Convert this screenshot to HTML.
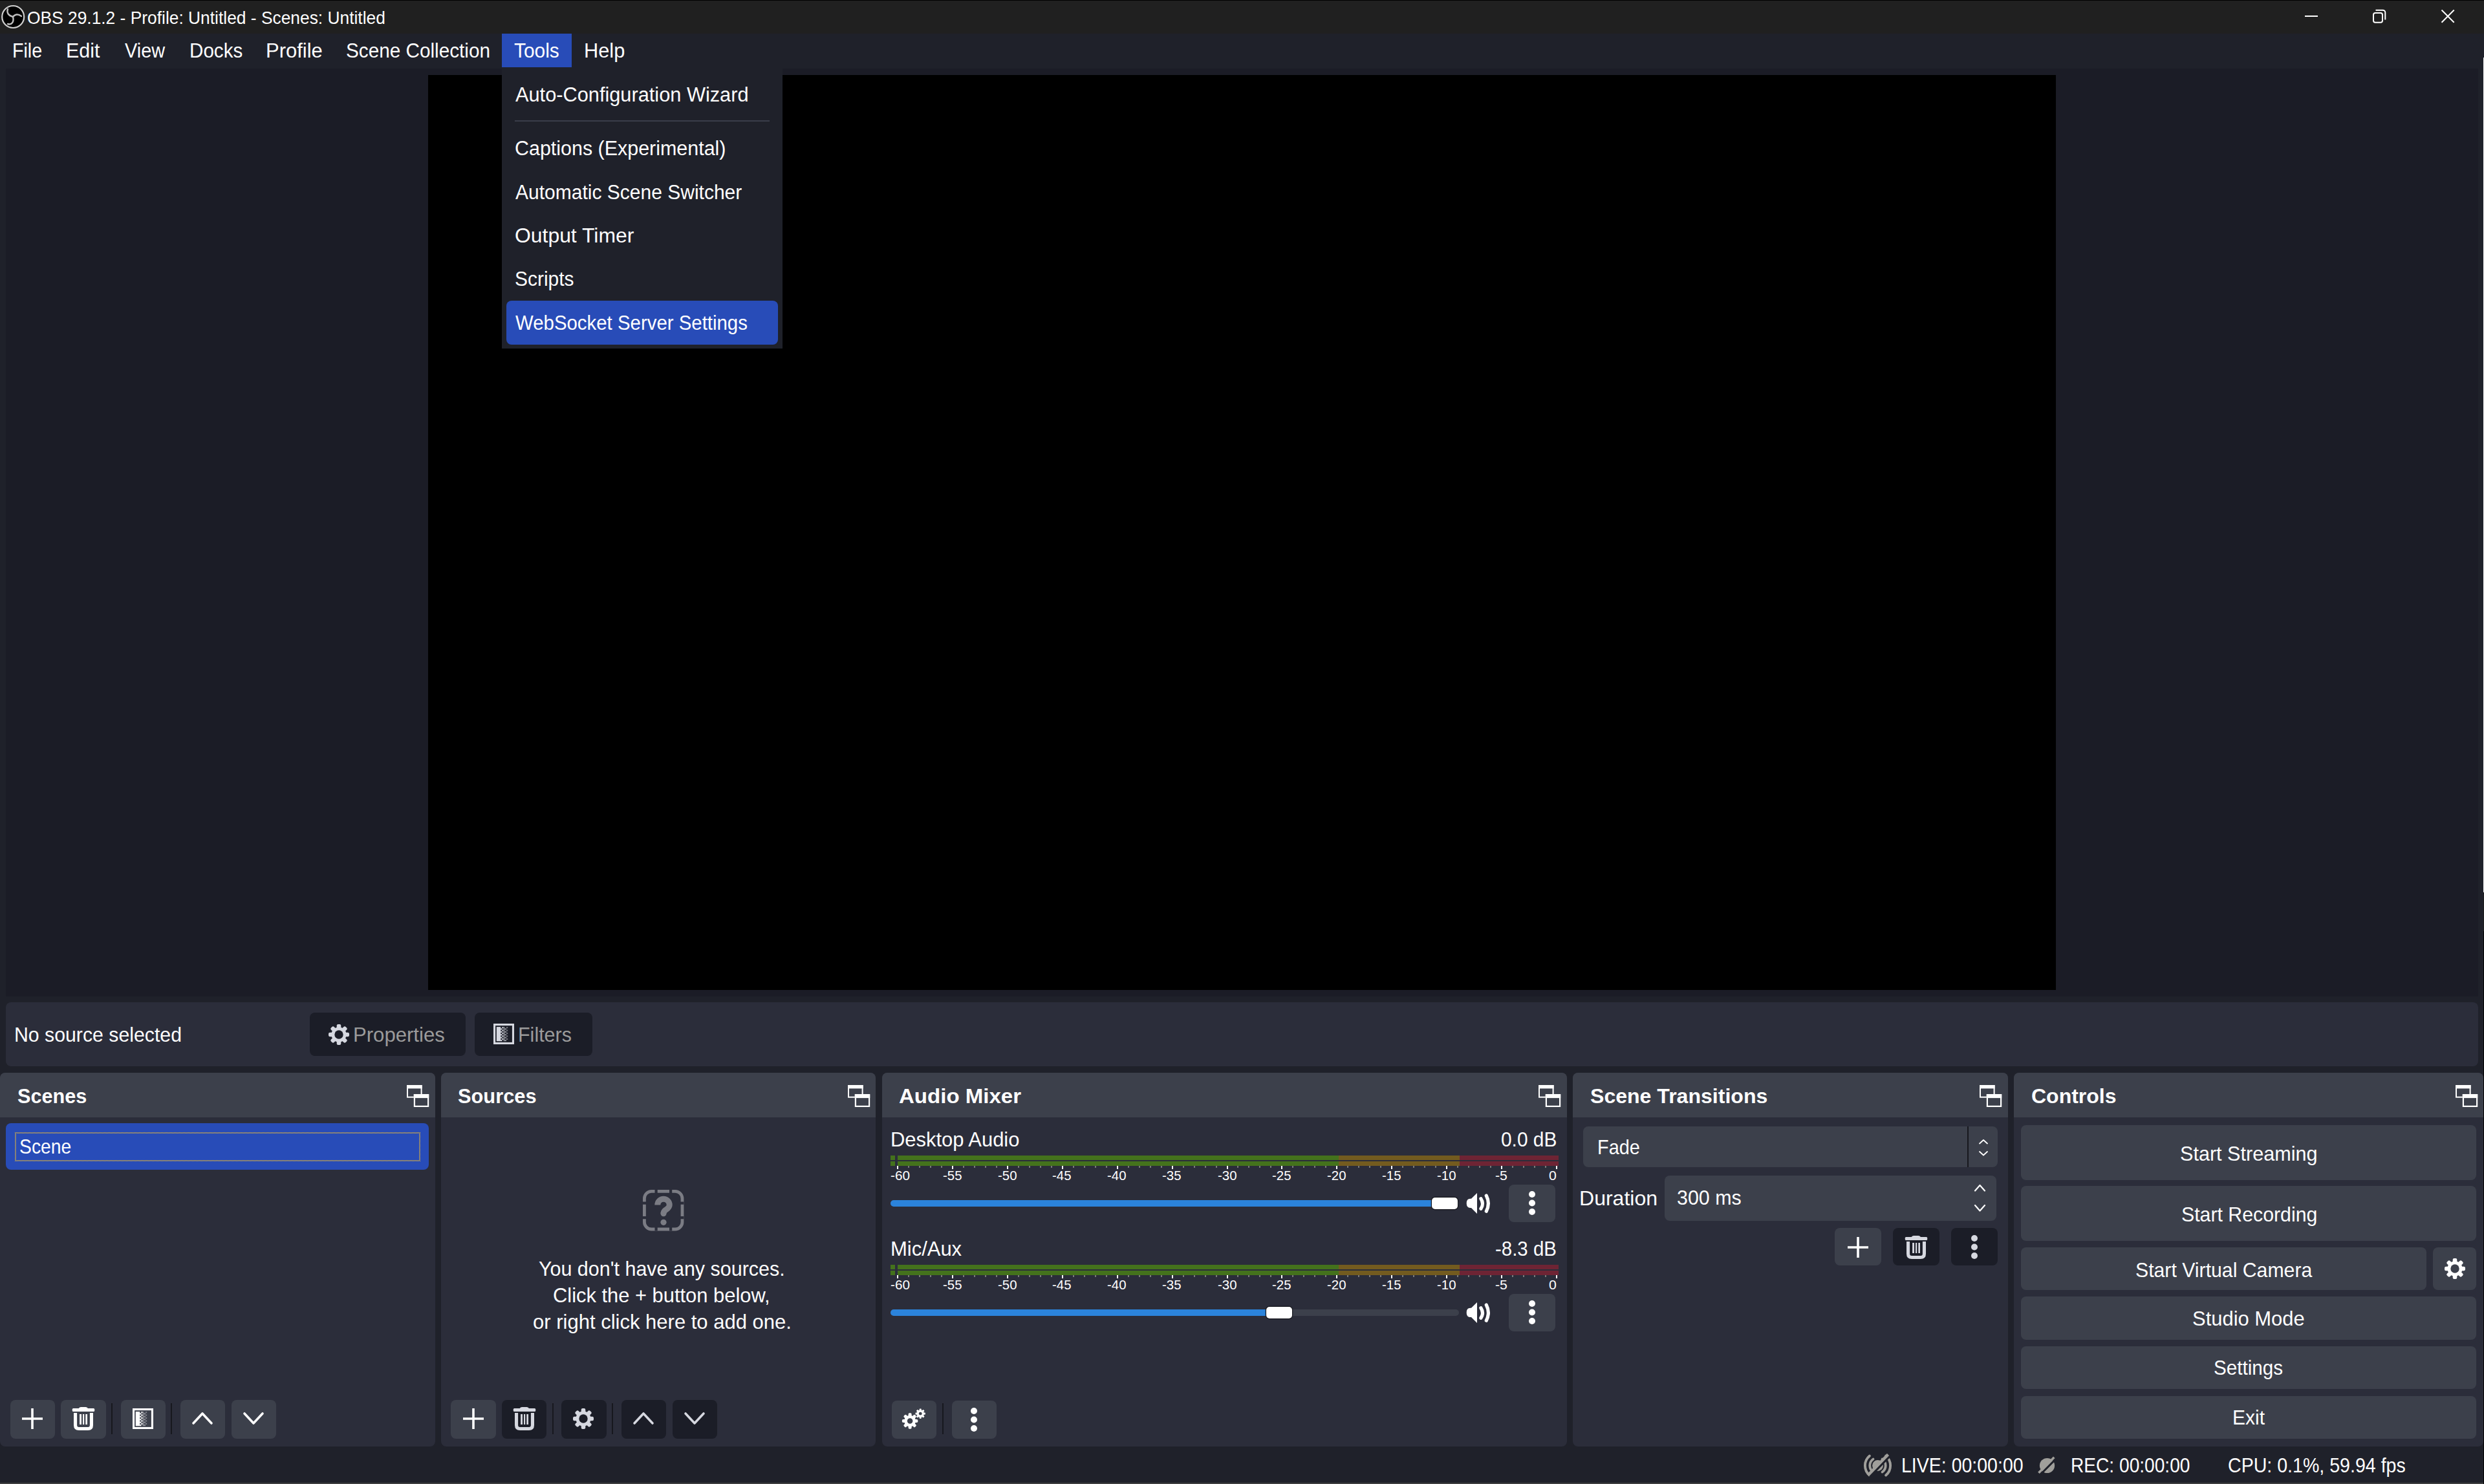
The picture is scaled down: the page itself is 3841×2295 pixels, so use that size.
<!DOCTYPE html>
<html><head><meta charset="utf-8"><title>OBS 29.1.2 - Profile: Untitled - Scenes: Untitled</title>
<style>
html,body{margin:0;padding:0;}
body{width:3841px;height:2295px;overflow:hidden;position:relative;font-family:"Liberation Sans",sans-serif;background:#1f212a;}
svg{display:block;overflow:visible}
</style></head><body>
<div style="position:absolute;left:0px;top:0px;width:3841px;height:2295px;background:#1f212a;"></div>
<div style="position:absolute;left:0px;top:0px;width:3841px;height:1px;background:#000;"></div>
<div style="position:absolute;left:0px;top:1px;width:3841px;height:51px;background:#202020;"></div>
<svg style="position:absolute;left:0px;top:6px" width="40" height="40" viewBox="0 0 40 40"><circle cx="20.2" cy="20" r="17" fill="#000" stroke="#cfcfcf" stroke-width="2.2"/><g fill="none" stroke="#bdbdbd" stroke-width="2.4" stroke-linecap="round"><path d="M12 8 C10 14 13 18 20 20"/><path d="M33 19 C28 15 23 16 20 20"/><path d="M12 31 C18 33 22 28 20 20"/></g></svg>
<div style="position:absolute;left:3564px;top:24px;width:20px;height:2px;background:#fff;"></div>
<svg style="position:absolute;left:3666px;top:12px" width="28" height="28" viewBox="0 0 28 28"><rect x="4" y="8" width="14" height="14.8" rx="3" fill="none" stroke="#fff" stroke-width="2"/><path d="M7.5 3.7 H18.5 A3.8 3.8 0 0 1 22.3 7.5 V18.5" fill="none" stroke="#fff" stroke-width="2"/></svg>
<svg style="position:absolute;left:3770px;top:10px" width="30" height="30" viewBox="0 0 30 30"><path d="M5.5 5.5 L24.7 24.7 M24.7 5.5 L5.5 24.7" stroke="#fff" stroke-width="2"/></svg>
<div style="position:absolute;left:0px;top:52px;width:3841px;height:54px;background:#1f212a;"></div>
<div style="position:absolute;left:776px;top:52px;width:108px;height:52px;background:#284cb8;"></div>
<div style="position:absolute;left:9px;top:106px;width:3823px;height:1435px;background:#1b1c26;"></div>
<div style="position:absolute;left:662px;top:116px;width:2517px;height:1415px;background:#000;"></div>
<div style="position:absolute;left:9px;top:1550px;width:3823px;height:99px;background:#2b2d3a;border-radius:8px;"></div>
<div style="position:absolute;left:479px;top:1566px;width:241px;height:67px;background:#1b1d27;border-radius:8px;"></div>
<div style="position:absolute;left:734px;top:1566px;width:182px;height:67px;background:#1b1d27;border-radius:8px;"></div>
<svg style="position:absolute;left:508px;top:1584px" width="32" height="32" viewBox="0 0 32 32"><g fill="#d6d8e0"><circle cx="16.0" cy="16.0" r="11.60"/><rect x="12.70" y="0.00" width="6.60" height="8.00" rx="2.20" transform="rotate(0 16.0 16.0)"/><rect x="12.70" y="0.00" width="6.60" height="8.00" rx="2.20" transform="rotate(45 16.0 16.0)"/><rect x="12.70" y="0.00" width="6.60" height="8.00" rx="2.20" transform="rotate(90 16.0 16.0)"/><rect x="12.70" y="0.00" width="6.60" height="8.00" rx="2.20" transform="rotate(135 16.0 16.0)"/><rect x="12.70" y="0.00" width="6.60" height="8.00" rx="2.20" transform="rotate(180 16.0 16.0)"/><rect x="12.70" y="0.00" width="6.60" height="8.00" rx="2.20" transform="rotate(225 16.0 16.0)"/><rect x="12.70" y="0.00" width="6.60" height="8.00" rx="2.20" transform="rotate(270 16.0 16.0)"/><rect x="12.70" y="0.00" width="6.60" height="8.00" rx="2.20" transform="rotate(315 16.0 16.0)"/></g><circle cx="16.0" cy="16.0" r="6.70" fill="#1b1d27"/></svg>
<svg style="position:absolute;left:763px;top:1583px" width="32" height="32" viewBox="0 0 32 32"><rect x="1.55" y="1.55" width="28.9" height="28.9" fill="none" stroke="#d6d8e0" stroke-width="3.1"/><rect x="4.8" y="5.1" width="6.4" height="22.1" fill="#d6d8e0"/><rect x="13.4" y="5.10" width="2.2" height="2.21" fill="#d6d8e0"/><rect x="15.6" y="5.10" width="2.2" height="2.21" fill="#8d8f96" opacity="0.75"/><rect x="20.0" y="5.10" width="2.2" height="2.21" fill="#8d8f96" opacity="0.8"/><rect x="11.2" y="7.31" width="2.2" height="2.21" fill="#d6d8e0"/><rect x="15.6" y="7.31" width="2.2" height="2.21" fill="#8d8f96" opacity="1"/><rect x="17.8" y="7.31" width="2.2" height="2.21" fill="#8d8f96"/><rect x="13.4" y="9.52" width="2.2" height="2.21" fill="#d6d8e0"/><rect x="15.6" y="9.52" width="2.2" height="2.21" fill="#8d8f96" opacity="0.75"/><rect x="20.0" y="9.52" width="2.2" height="2.21" fill="#8d8f96" opacity="0.8"/><rect x="11.2" y="11.73" width="2.2" height="2.21" fill="#d6d8e0"/><rect x="15.6" y="11.73" width="2.2" height="2.21" fill="#8d8f96" opacity="1"/><rect x="17.8" y="11.73" width="2.2" height="2.21" fill="#8d8f96"/><rect x="13.4" y="13.94" width="2.2" height="2.21" fill="#d6d8e0"/><rect x="15.6" y="13.94" width="2.2" height="2.21" fill="#8d8f96" opacity="0.75"/><rect x="20.0" y="13.94" width="2.2" height="2.21" fill="#8d8f96" opacity="0.8"/><rect x="11.2" y="16.15" width="2.2" height="2.21" fill="#d6d8e0"/><rect x="15.6" y="16.15" width="2.2" height="2.21" fill="#8d8f96" opacity="1"/><rect x="17.8" y="16.15" width="2.2" height="2.21" fill="#8d8f96"/><rect x="13.4" y="18.36" width="2.2" height="2.21" fill="#d6d8e0"/><rect x="15.6" y="18.36" width="2.2" height="2.21" fill="#8d8f96" opacity="0.75"/><rect x="20.0" y="18.36" width="2.2" height="2.21" fill="#8d8f96" opacity="0.8"/><rect x="11.2" y="20.57" width="2.2" height="2.21" fill="#d6d8e0"/><rect x="15.6" y="20.57" width="2.2" height="2.21" fill="#8d8f96" opacity="1"/><rect x="17.8" y="20.57" width="2.2" height="2.21" fill="#8d8f96"/><rect x="13.4" y="22.78" width="2.2" height="2.21" fill="#d6d8e0"/><rect x="15.6" y="22.78" width="2.2" height="2.21" fill="#8d8f96" opacity="0.75"/><rect x="20.0" y="22.78" width="2.2" height="2.21" fill="#8d8f96" opacity="0.8"/><rect x="11.2" y="24.99" width="2.2" height="2.21" fill="#d6d8e0"/><rect x="15.6" y="24.99" width="2.2" height="2.21" fill="#8d8f96" opacity="1"/><rect x="17.8" y="24.99" width="2.2" height="2.21" fill="#8d8f96"/></svg>
<div style="position:absolute;left:0px;top:1659px;width:673px;height:578px;background:#2b2d3a;border-radius:8px;"></div>
<div style="position:absolute;left:0px;top:1659px;width:673px;height:69px;background:#3c404b;border-radius:8px 8px 0 0;"></div>
<svg style="position:absolute;left:629px;top:1678px" width="35" height="35" viewBox="0 0 35 35"><rect x="1" y="1" width="21.6" height="17.7" fill="none" stroke="#fff" stroke-width="2"/><rect x="0" y="0" width="23.6" height="5.4" fill="#fff"/><rect x="10.8" y="14.1" width="23.4" height="19.9" fill="#3c404b"/><rect x="11.9" y="15.2" width="21.2" height="17.7" fill="none" stroke="#fff" stroke-width="2.2"/><rect x="10.8" y="14.1" width="23.4" height="6" fill="#fff"/></svg>
<div style="position:absolute;left:682px;top:1659px;width:672px;height:578px;background:#2b2d3a;border-radius:8px;"></div>
<div style="position:absolute;left:682px;top:1659px;width:672px;height:69px;background:#3c404b;border-radius:8px 8px 0 0;"></div>
<svg style="position:absolute;left:1311px;top:1678px" width="35" height="35" viewBox="0 0 35 35"><rect x="1" y="1" width="21.6" height="17.7" fill="none" stroke="#fff" stroke-width="2"/><rect x="0" y="0" width="23.6" height="5.4" fill="#fff"/><rect x="10.8" y="14.1" width="23.4" height="19.9" fill="#3c404b"/><rect x="11.9" y="15.2" width="21.2" height="17.7" fill="none" stroke="#fff" stroke-width="2.2"/><rect x="10.8" y="14.1" width="23.4" height="6" fill="#fff"/></svg>
<div style="position:absolute;left:1364px;top:1659px;width:1059px;height:578px;background:#2b2d3a;border-radius:8px;"></div>
<div style="position:absolute;left:1364px;top:1659px;width:1059px;height:69px;background:#3c404b;border-radius:8px 8px 0 0;"></div>
<svg style="position:absolute;left:2379px;top:1678px" width="35" height="35" viewBox="0 0 35 35"><rect x="1" y="1" width="21.6" height="17.7" fill="none" stroke="#fff" stroke-width="2"/><rect x="0" y="0" width="23.6" height="5.4" fill="#fff"/><rect x="10.8" y="14.1" width="23.4" height="19.9" fill="#3c404b"/><rect x="11.9" y="15.2" width="21.2" height="17.7" fill="none" stroke="#fff" stroke-width="2.2"/><rect x="10.8" y="14.1" width="23.4" height="6" fill="#fff"/></svg>
<div style="position:absolute;left:2432px;top:1659px;width:673px;height:578px;background:#2b2d3a;border-radius:8px;"></div>
<div style="position:absolute;left:2432px;top:1659px;width:673px;height:69px;background:#3c404b;border-radius:8px 8px 0 0;"></div>
<svg style="position:absolute;left:3061px;top:1678px" width="35" height="35" viewBox="0 0 35 35"><rect x="1" y="1" width="21.6" height="17.7" fill="none" stroke="#fff" stroke-width="2"/><rect x="0" y="0" width="23.6" height="5.4" fill="#fff"/><rect x="10.8" y="14.1" width="23.4" height="19.9" fill="#3c404b"/><rect x="11.9" y="15.2" width="21.2" height="17.7" fill="none" stroke="#fff" stroke-width="2.2"/><rect x="10.8" y="14.1" width="23.4" height="6" fill="#fff"/></svg>
<div style="position:absolute;left:3114px;top:1659px;width:726px;height:578px;background:#2b2d3a;border-radius:8px;"></div>
<div style="position:absolute;left:3114px;top:1659px;width:726px;height:69px;background:#3c404b;border-radius:8px 8px 0 0;"></div>
<svg style="position:absolute;left:3797px;top:1678px" width="35" height="35" viewBox="0 0 35 35"><rect x="1" y="1" width="21.6" height="17.7" fill="none" stroke="#fff" stroke-width="2"/><rect x="0" y="0" width="23.6" height="5.4" fill="#fff"/><rect x="10.8" y="14.1" width="23.4" height="19.9" fill="#3c404b"/><rect x="11.9" y="15.2" width="21.2" height="17.7" fill="none" stroke="#fff" stroke-width="2.2"/><rect x="10.8" y="14.1" width="23.4" height="6" fill="#fff"/></svg>
<div style="position:absolute;left:9px;top:1737px;width:654px;height:72px;background:#284cb8;border-radius:8px;"></div>
<svg style="position:absolute;left:23px;top:1751px" width="627" height="45" viewBox="0 0 627 45"><defs><pattern id="chk" width="2" height="2" patternUnits="userSpaceOnUse"><rect x="0" y="0" width="1" height="1" fill="#e2b53c"/><rect x="1" y="1" width="1" height="1" fill="#e2b53c"/></pattern></defs><path d="M0 0 H627 V45 H0 Z M2 2 V43 H625 V2 Z" fill="url(#chk)" fill-rule="evenodd"/></svg>
<div style="position:absolute;left:16px;top:2165px;width:69px;height:60px;background:#3c404b;border-radius:8px;"></div>
<div style="position:absolute;left:94px;top:2165px;width:70px;height:60px;background:#3c404b;border-radius:8px;"></div>
<div style="position:absolute;left:187px;top:2165px;width:69px;height:60px;background:#3c404b;border-radius:8px;"></div>
<div style="position:absolute;left:279px;top:2165px;width:69px;height:60px;background:#3c404b;border-radius:8px;"></div>
<div style="position:absolute;left:358px;top:2165px;width:69px;height:60px;background:#3c404b;border-radius:8px;"></div>
<div style="position:absolute;left:172px;top:2170px;width:2px;height:48px;background:#17181e;"></div>
<div style="position:absolute;left:264px;top:2170px;width:2px;height:48px;background:#17181e;"></div>
<svg style="position:absolute;left:34px;top:2178px" width="32" height="32" viewBox="0 0 32 32"><path d="M16 0 V32 M0 16 H32" stroke="#fff" stroke-width="3.6"/></svg>
<svg style="position:absolute;left:112px;top:2176px" width="35" height="37" viewBox="0 0 35 37"><rect x="-0.2" y="2" width="34.4" height="5.1" rx="1.6" fill="#fff"/><path d="M9.4 2.5 Q10.4 -0.1 12.9 -0.1 H20.7 Q23.2 -0.1 24.2 2.5 Z" fill="#fff"/><path d="M4.55 9 V28 Q4.55 33.45 10 33.45 H24 Q29.45 33.45 29.45 28 V9" fill="none" stroke="#fff" stroke-width="5.1"/><rect x="11.1" y="11" width="2.9" height="16" fill="#fff"/><rect x="16" y="11" width="2.2" height="16" fill="#fff"/><rect x="20.3" y="11" width="2.7" height="16" fill="#fff"/></svg>
<svg style="position:absolute;left:205px;top:2178px" width="32" height="32" viewBox="0 0 32 32"><rect x="1.55" y="1.55" width="28.9" height="28.9" fill="none" stroke="#fff" stroke-width="3.1"/><rect x="4.8" y="5.1" width="6.4" height="22.1" fill="#fff"/><rect x="13.4" y="5.10" width="2.2" height="2.21" fill="#fff"/><rect x="15.6" y="5.10" width="2.2" height="2.21" fill="#8d8f96" opacity="0.75"/><rect x="20.0" y="5.10" width="2.2" height="2.21" fill="#8d8f96" opacity="0.8"/><rect x="11.2" y="7.31" width="2.2" height="2.21" fill="#fff"/><rect x="15.6" y="7.31" width="2.2" height="2.21" fill="#8d8f96" opacity="1"/><rect x="17.8" y="7.31" width="2.2" height="2.21" fill="#8d8f96"/><rect x="13.4" y="9.52" width="2.2" height="2.21" fill="#fff"/><rect x="15.6" y="9.52" width="2.2" height="2.21" fill="#8d8f96" opacity="0.75"/><rect x="20.0" y="9.52" width="2.2" height="2.21" fill="#8d8f96" opacity="0.8"/><rect x="11.2" y="11.73" width="2.2" height="2.21" fill="#fff"/><rect x="15.6" y="11.73" width="2.2" height="2.21" fill="#8d8f96" opacity="1"/><rect x="17.8" y="11.73" width="2.2" height="2.21" fill="#8d8f96"/><rect x="13.4" y="13.94" width="2.2" height="2.21" fill="#fff"/><rect x="15.6" y="13.94" width="2.2" height="2.21" fill="#8d8f96" opacity="0.75"/><rect x="20.0" y="13.94" width="2.2" height="2.21" fill="#8d8f96" opacity="0.8"/><rect x="11.2" y="16.15" width="2.2" height="2.21" fill="#fff"/><rect x="15.6" y="16.15" width="2.2" height="2.21" fill="#8d8f96" opacity="1"/><rect x="17.8" y="16.15" width="2.2" height="2.21" fill="#8d8f96"/><rect x="13.4" y="18.36" width="2.2" height="2.21" fill="#fff"/><rect x="15.6" y="18.36" width="2.2" height="2.21" fill="#8d8f96" opacity="0.75"/><rect x="20.0" y="18.36" width="2.2" height="2.21" fill="#8d8f96" opacity="0.8"/><rect x="11.2" y="20.57" width="2.2" height="2.21" fill="#fff"/><rect x="15.6" y="20.57" width="2.2" height="2.21" fill="#8d8f96" opacity="1"/><rect x="17.8" y="20.57" width="2.2" height="2.21" fill="#8d8f96"/><rect x="13.4" y="22.78" width="2.2" height="2.21" fill="#fff"/><rect x="15.6" y="22.78" width="2.2" height="2.21" fill="#8d8f96" opacity="0.75"/><rect x="20.0" y="22.78" width="2.2" height="2.21" fill="#8d8f96" opacity="0.8"/><rect x="11.2" y="24.99" width="2.2" height="2.21" fill="#fff"/><rect x="15.6" y="24.99" width="2.2" height="2.21" fill="#8d8f96" opacity="1"/><rect x="17.8" y="24.99" width="2.2" height="2.21" fill="#8d8f96"/></svg>
<svg style="position:absolute;left:297px;top:2184px" width="32" height="19" viewBox="0 0 32 19"><path d="M2 17 L16.0 2 L30 17" fill="none" stroke="#fff" stroke-width="3.6" stroke-linecap="round" stroke-linejoin="round"/></svg>
<svg style="position:absolute;left:376px;top:2184px" width="32" height="19" viewBox="0 0 32 19"><path d="M2 2 L16.0 17 L30 2" fill="none" stroke="#fff" stroke-width="3.6" stroke-linecap="round" stroke-linejoin="round"/></svg>
<svg style="position:absolute;left:994px;top:1840px" width="64" height="64" viewBox="0 0 64 64"><rect x="2.4" y="2.4" width="58.6" height="58.6" rx="11" fill="none" stroke="#7b7c84" stroke-width="4.8"/><rect x="18.5" y="0" width="4.2" height="6" fill="#2b2d3a"/><rect x="18.5" y="57.4" width="4.2" height="6" fill="#2b2d3a"/><rect x="0" y="18.5" width="6" height="4.2" fill="#2b2d3a"/><rect x="57.4" y="18.5" width="6" height="4.2" fill="#2b2d3a"/><rect x="41" y="0" width="4.2" height="6" fill="#2b2d3a"/><rect x="41" y="57.4" width="4.2" height="6" fill="#2b2d3a"/><rect x="0" y="41" width="6" height="4.2" fill="#2b2d3a"/><rect x="57.4" y="41" width="6" height="4.2" fill="#2b2d3a"/><path d="M22.8 23.4 A9.2 9.2 0 0 1 41.2 23.4 C41.2 28 36.5 30 34 32.3 C32.6 33.7 32 35 32 36.8" fill="none" stroke="#7b7c84" stroke-width="9"/><circle cx="32" cy="36.8" r="4.5" fill="#7b7c84"/><circle cx="32" cy="50.3" r="4.6" fill="#7b7c84"/></svg>
<div style="position:absolute;left:697px;top:2165px;width:70px;height:60px;background:#3c404b;border-radius:8px;"></div>
<div style="position:absolute;left:776px;top:2165px;width:69px;height:60px;background:#1b1d27;border-radius:8px;"></div>
<div style="position:absolute;left:868px;top:2165px;width:70px;height:60px;background:#1b1d27;border-radius:8px;"></div>
<div style="position:absolute;left:961px;top:2165px;width:69px;height:60px;background:#1b1d27;border-radius:8px;"></div>
<div style="position:absolute;left:1040px;top:2165px;width:69px;height:60px;background:#1b1d27;border-radius:8px;"></div>
<div style="position:absolute;left:854px;top:2170px;width:2px;height:48px;background:#17181e;"></div>
<div style="position:absolute;left:946px;top:2170px;width:2px;height:48px;background:#17181e;"></div>
<svg style="position:absolute;left:716px;top:2178px" width="32" height="32" viewBox="0 0 32 32"><path d="M16 0 V32 M0 16 H32" stroke="#fff" stroke-width="3.6"/></svg>
<svg style="position:absolute;left:794px;top:2176px" width="35" height="37" viewBox="0 0 35 37"><rect x="-0.2" y="2" width="34.4" height="5.1" rx="1.6" fill="#d6d8e0"/><path d="M9.4 2.5 Q10.4 -0.1 12.9 -0.1 H20.7 Q23.2 -0.1 24.2 2.5 Z" fill="#d6d8e0"/><path d="M4.55 9 V28 Q4.55 33.45 10 33.45 H24 Q29.45 33.45 29.45 28 V9" fill="none" stroke="#d6d8e0" stroke-width="5.1"/><rect x="11.1" y="11" width="2.9" height="16" fill="#d6d8e0"/><rect x="16" y="11" width="2.2" height="16" fill="#d6d8e0"/><rect x="20.3" y="11" width="2.7" height="16" fill="#d6d8e0"/></svg>
<svg style="position:absolute;left:886px;top:2178px" width="32" height="32" viewBox="0 0 32 32"><g fill="#d6d8e0"><circle cx="16.0" cy="16.0" r="11.60"/><rect x="12.70" y="0.00" width="6.60" height="8.00" rx="2.20" transform="rotate(0 16.0 16.0)"/><rect x="12.70" y="0.00" width="6.60" height="8.00" rx="2.20" transform="rotate(45 16.0 16.0)"/><rect x="12.70" y="0.00" width="6.60" height="8.00" rx="2.20" transform="rotate(90 16.0 16.0)"/><rect x="12.70" y="0.00" width="6.60" height="8.00" rx="2.20" transform="rotate(135 16.0 16.0)"/><rect x="12.70" y="0.00" width="6.60" height="8.00" rx="2.20" transform="rotate(180 16.0 16.0)"/><rect x="12.70" y="0.00" width="6.60" height="8.00" rx="2.20" transform="rotate(225 16.0 16.0)"/><rect x="12.70" y="0.00" width="6.60" height="8.00" rx="2.20" transform="rotate(270 16.0 16.0)"/><rect x="12.70" y="0.00" width="6.60" height="8.00" rx="2.20" transform="rotate(315 16.0 16.0)"/></g><circle cx="16.0" cy="16.0" r="6.70" fill="#1b1d27"/></svg>
<svg style="position:absolute;left:979px;top:2184px" width="32" height="19" viewBox="0 0 32 19"><path d="M2 17 L16.0 2 L30 17" fill="none" stroke="#d6d8e0" stroke-width="3.6" stroke-linecap="round" stroke-linejoin="round"/></svg>
<svg style="position:absolute;left:1058px;top:2184px" width="32" height="19" viewBox="0 0 32 19"><path d="M2 2 L16.0 17 L30 2" fill="none" stroke="#d6d8e0" stroke-width="3.6" stroke-linecap="round" stroke-linejoin="round"/></svg>
<div style="position:absolute;left:1377px;top:1787px;width:7px;height:7px;background:#44721c;"></div>
<div style="position:absolute;left:1388px;top:1787px;width:682px;height:7px;background:#44721c;"></div>
<div style="position:absolute;left:2070px;top:1787px;width:187px;height:7px;background:#735b1f;"></div>
<div style="position:absolute;left:2257px;top:1787px;width:153px;height:7px;background:#6e2434;"></div>
<div style="position:absolute;left:1377px;top:1796px;width:7px;height:7px;background:#44721c;"></div>
<div style="position:absolute;left:1388px;top:1796px;width:682px;height:7px;background:#44721c;"></div>
<div style="position:absolute;left:2070px;top:1796px;width:187px;height:7px;background:#735b1f;"></div>
<div style="position:absolute;left:2257px;top:1796px;width:153px;height:7px;background:#6e2434;"></div>
<div style="position:absolute;left:1387px;top:1803px;width:2px;height:5px;background:#ffffff;"></div>
<div style="position:absolute;left:1404px;top:1803px;width:2px;height:3px;background:#7a7a7a;"></div>
<div style="position:absolute;left:1421px;top:1803px;width:2px;height:3px;background:#7a7a7a;"></div>
<div style="position:absolute;left:1438px;top:1803px;width:2px;height:3px;background:#7a7a7a;"></div>
<div style="position:absolute;left:1455px;top:1803px;width:2px;height:3px;background:#7a7a7a;"></div>
<div style="position:absolute;left:1472px;top:1803px;width:2px;height:5px;background:#ffffff;"></div>
<div style="position:absolute;left:1489px;top:1803px;width:2px;height:3px;background:#7a7a7a;"></div>
<div style="position:absolute;left:1506px;top:1803px;width:2px;height:3px;background:#7a7a7a;"></div>
<div style="position:absolute;left:1523px;top:1803px;width:2px;height:3px;background:#7a7a7a;"></div>
<div style="position:absolute;left:1540px;top:1803px;width:2px;height:3px;background:#7a7a7a;"></div>
<div style="position:absolute;left:1557px;top:1803px;width:2px;height:5px;background:#ffffff;"></div>
<div style="position:absolute;left:1574px;top:1803px;width:2px;height:3px;background:#7a7a7a;"></div>
<div style="position:absolute;left:1591px;top:1803px;width:2px;height:3px;background:#7a7a7a;"></div>
<div style="position:absolute;left:1608px;top:1803px;width:2px;height:3px;background:#7a7a7a;"></div>
<div style="position:absolute;left:1625px;top:1803px;width:2px;height:3px;background:#7a7a7a;"></div>
<div style="position:absolute;left:1642px;top:1803px;width:2px;height:5px;background:#ffffff;"></div>
<div style="position:absolute;left:1659px;top:1803px;width:2px;height:3px;background:#7a7a7a;"></div>
<div style="position:absolute;left:1676px;top:1803px;width:2px;height:3px;background:#7a7a7a;"></div>
<div style="position:absolute;left:1693px;top:1803px;width:2px;height:3px;background:#7a7a7a;"></div>
<div style="position:absolute;left:1710px;top:1803px;width:2px;height:3px;background:#7a7a7a;"></div>
<div style="position:absolute;left:1727px;top:1803px;width:2px;height:5px;background:#ffffff;"></div>
<div style="position:absolute;left:1744px;top:1803px;width:2px;height:3px;background:#7a7a7a;"></div>
<div style="position:absolute;left:1761px;top:1803px;width:2px;height:3px;background:#7a7a7a;"></div>
<div style="position:absolute;left:1778px;top:1803px;width:2px;height:3px;background:#7a7a7a;"></div>
<div style="position:absolute;left:1795px;top:1803px;width:2px;height:3px;background:#7a7a7a;"></div>
<div style="position:absolute;left:1812px;top:1803px;width:2px;height:5px;background:#ffffff;"></div>
<div style="position:absolute;left:1829px;top:1803px;width:2px;height:3px;background:#7a7a7a;"></div>
<div style="position:absolute;left:1846px;top:1803px;width:2px;height:3px;background:#7a7a7a;"></div>
<div style="position:absolute;left:1863px;top:1803px;width:2px;height:3px;background:#7a7a7a;"></div>
<div style="position:absolute;left:1880px;top:1803px;width:2px;height:3px;background:#7a7a7a;"></div>
<div style="position:absolute;left:1897px;top:1803px;width:2px;height:5px;background:#ffffff;"></div>
<div style="position:absolute;left:1913px;top:1803px;width:2px;height:3px;background:#7a7a7a;"></div>
<div style="position:absolute;left:1930px;top:1803px;width:2px;height:3px;background:#7a7a7a;"></div>
<div style="position:absolute;left:1947px;top:1803px;width:2px;height:3px;background:#7a7a7a;"></div>
<div style="position:absolute;left:1964px;top:1803px;width:2px;height:3px;background:#7a7a7a;"></div>
<div style="position:absolute;left:1981px;top:1803px;width:2px;height:5px;background:#ffffff;"></div>
<div style="position:absolute;left:1998px;top:1803px;width:2px;height:3px;background:#7a7a7a;"></div>
<div style="position:absolute;left:2015px;top:1803px;width:2px;height:3px;background:#7a7a7a;"></div>
<div style="position:absolute;left:2032px;top:1803px;width:2px;height:3px;background:#7a7a7a;"></div>
<div style="position:absolute;left:2049px;top:1803px;width:2px;height:3px;background:#7a7a7a;"></div>
<div style="position:absolute;left:2066px;top:1803px;width:2px;height:5px;background:#ffffff;"></div>
<div style="position:absolute;left:2083px;top:1803px;width:2px;height:3px;background:#7a7a7a;"></div>
<div style="position:absolute;left:2100px;top:1803px;width:2px;height:3px;background:#7a7a7a;"></div>
<div style="position:absolute;left:2117px;top:1803px;width:2px;height:3px;background:#7a7a7a;"></div>
<div style="position:absolute;left:2134px;top:1803px;width:2px;height:3px;background:#7a7a7a;"></div>
<div style="position:absolute;left:2151px;top:1803px;width:2px;height:5px;background:#ffffff;"></div>
<div style="position:absolute;left:2168px;top:1803px;width:2px;height:3px;background:#7a7a7a;"></div>
<div style="position:absolute;left:2185px;top:1803px;width:2px;height:3px;background:#7a7a7a;"></div>
<div style="position:absolute;left:2202px;top:1803px;width:2px;height:3px;background:#7a7a7a;"></div>
<div style="position:absolute;left:2219px;top:1803px;width:2px;height:3px;background:#7a7a7a;"></div>
<div style="position:absolute;left:2236px;top:1803px;width:2px;height:5px;background:#ffffff;"></div>
<div style="position:absolute;left:2253px;top:1803px;width:2px;height:3px;background:#7a7a7a;"></div>
<div style="position:absolute;left:2270px;top:1803px;width:2px;height:3px;background:#7a7a7a;"></div>
<div style="position:absolute;left:2287px;top:1803px;width:2px;height:3px;background:#7a7a7a;"></div>
<div style="position:absolute;left:2304px;top:1803px;width:2px;height:3px;background:#7a7a7a;"></div>
<div style="position:absolute;left:2321px;top:1803px;width:2px;height:5px;background:#ffffff;"></div>
<div style="position:absolute;left:2338px;top:1803px;width:2px;height:3px;background:#7a7a7a;"></div>
<div style="position:absolute;left:2355px;top:1803px;width:2px;height:3px;background:#7a7a7a;"></div>
<div style="position:absolute;left:2372px;top:1803px;width:2px;height:3px;background:#7a7a7a;"></div>
<div style="position:absolute;left:2389px;top:1803px;width:2px;height:3px;background:#7a7a7a;"></div>
<div style="position:absolute;left:2406px;top:1803px;width:2px;height:5px;background:#ffffff;"></div>
<div style="position:absolute;left:1377px;top:1856px;width:879px;height:10px;background:#3c404b;border-radius:5px;"></div>
<div style="position:absolute;left:1377px;top:1856px;width:846px;height:10px;background:#2b83db;border-radius:5px;"></div>
<div style="position:absolute;left:2214px;top:1852px;width:40px;height:18px;background:#ffffff;border-radius:5px;box-shadow:0 0 0 1.2px #15161c;"></div>
<svg style="position:absolute;left:2267px;top:1845px" width="40" height="33" viewBox="0 0 40 33"><path d="M6.5 8.8 H8 L17 0 V32 L8 23 H6.5 Q0.7 23 0.7 16 Q0.7 8.8 6.5 8.8 Z" fill="#fff"/><path d="M22.9 8.7 Q28.1 16.5 22.9 24.3" fill="none" stroke="#fff" stroke-width="5.2" stroke-linecap="round"/><path d="M31.3 4 Q37.5 16.1 31.3 28.2" fill="none" stroke="#fff" stroke-width="5.2" stroke-linecap="round"/></svg>
<div style="position:absolute;left:2333px;top:1832px;width:72px;height:58px;background:#3c404b;border-radius:8px;"></div>
<svg style="position:absolute;left:2363px;top:1841px" width="12" height="40" viewBox="0 0 12 40"><circle cx="6" cy="6.0" r="5" fill="#fff"/><circle cx="6" cy="19.5" r="5" fill="#fff"/><circle cx="6" cy="33.0" r="5" fill="#fff"/></svg>
<div style="position:absolute;left:1377px;top:1956px;width:7px;height:7px;background:#44721c;"></div>
<div style="position:absolute;left:1388px;top:1956px;width:682px;height:7px;background:#44721c;"></div>
<div style="position:absolute;left:2070px;top:1956px;width:187px;height:7px;background:#735b1f;"></div>
<div style="position:absolute;left:2257px;top:1956px;width:153px;height:7px;background:#6e2434;"></div>
<div style="position:absolute;left:1377px;top:1965px;width:7px;height:7px;background:#44721c;"></div>
<div style="position:absolute;left:1388px;top:1965px;width:682px;height:7px;background:#44721c;"></div>
<div style="position:absolute;left:2070px;top:1965px;width:187px;height:7px;background:#735b1f;"></div>
<div style="position:absolute;left:2257px;top:1965px;width:153px;height:7px;background:#6e2434;"></div>
<div style="position:absolute;left:1387px;top:1972px;width:2px;height:5px;background:#ffffff;"></div>
<div style="position:absolute;left:1404px;top:1972px;width:2px;height:3px;background:#7a7a7a;"></div>
<div style="position:absolute;left:1421px;top:1972px;width:2px;height:3px;background:#7a7a7a;"></div>
<div style="position:absolute;left:1438px;top:1972px;width:2px;height:3px;background:#7a7a7a;"></div>
<div style="position:absolute;left:1455px;top:1972px;width:2px;height:3px;background:#7a7a7a;"></div>
<div style="position:absolute;left:1472px;top:1972px;width:2px;height:5px;background:#ffffff;"></div>
<div style="position:absolute;left:1489px;top:1972px;width:2px;height:3px;background:#7a7a7a;"></div>
<div style="position:absolute;left:1506px;top:1972px;width:2px;height:3px;background:#7a7a7a;"></div>
<div style="position:absolute;left:1523px;top:1972px;width:2px;height:3px;background:#7a7a7a;"></div>
<div style="position:absolute;left:1540px;top:1972px;width:2px;height:3px;background:#7a7a7a;"></div>
<div style="position:absolute;left:1557px;top:1972px;width:2px;height:5px;background:#ffffff;"></div>
<div style="position:absolute;left:1574px;top:1972px;width:2px;height:3px;background:#7a7a7a;"></div>
<div style="position:absolute;left:1591px;top:1972px;width:2px;height:3px;background:#7a7a7a;"></div>
<div style="position:absolute;left:1608px;top:1972px;width:2px;height:3px;background:#7a7a7a;"></div>
<div style="position:absolute;left:1625px;top:1972px;width:2px;height:3px;background:#7a7a7a;"></div>
<div style="position:absolute;left:1642px;top:1972px;width:2px;height:5px;background:#ffffff;"></div>
<div style="position:absolute;left:1659px;top:1972px;width:2px;height:3px;background:#7a7a7a;"></div>
<div style="position:absolute;left:1676px;top:1972px;width:2px;height:3px;background:#7a7a7a;"></div>
<div style="position:absolute;left:1693px;top:1972px;width:2px;height:3px;background:#7a7a7a;"></div>
<div style="position:absolute;left:1710px;top:1972px;width:2px;height:3px;background:#7a7a7a;"></div>
<div style="position:absolute;left:1727px;top:1972px;width:2px;height:5px;background:#ffffff;"></div>
<div style="position:absolute;left:1744px;top:1972px;width:2px;height:3px;background:#7a7a7a;"></div>
<div style="position:absolute;left:1761px;top:1972px;width:2px;height:3px;background:#7a7a7a;"></div>
<div style="position:absolute;left:1778px;top:1972px;width:2px;height:3px;background:#7a7a7a;"></div>
<div style="position:absolute;left:1795px;top:1972px;width:2px;height:3px;background:#7a7a7a;"></div>
<div style="position:absolute;left:1812px;top:1972px;width:2px;height:5px;background:#ffffff;"></div>
<div style="position:absolute;left:1829px;top:1972px;width:2px;height:3px;background:#7a7a7a;"></div>
<div style="position:absolute;left:1846px;top:1972px;width:2px;height:3px;background:#7a7a7a;"></div>
<div style="position:absolute;left:1863px;top:1972px;width:2px;height:3px;background:#7a7a7a;"></div>
<div style="position:absolute;left:1880px;top:1972px;width:2px;height:3px;background:#7a7a7a;"></div>
<div style="position:absolute;left:1897px;top:1972px;width:2px;height:5px;background:#ffffff;"></div>
<div style="position:absolute;left:1913px;top:1972px;width:2px;height:3px;background:#7a7a7a;"></div>
<div style="position:absolute;left:1930px;top:1972px;width:2px;height:3px;background:#7a7a7a;"></div>
<div style="position:absolute;left:1947px;top:1972px;width:2px;height:3px;background:#7a7a7a;"></div>
<div style="position:absolute;left:1964px;top:1972px;width:2px;height:3px;background:#7a7a7a;"></div>
<div style="position:absolute;left:1981px;top:1972px;width:2px;height:5px;background:#ffffff;"></div>
<div style="position:absolute;left:1998px;top:1972px;width:2px;height:3px;background:#7a7a7a;"></div>
<div style="position:absolute;left:2015px;top:1972px;width:2px;height:3px;background:#7a7a7a;"></div>
<div style="position:absolute;left:2032px;top:1972px;width:2px;height:3px;background:#7a7a7a;"></div>
<div style="position:absolute;left:2049px;top:1972px;width:2px;height:3px;background:#7a7a7a;"></div>
<div style="position:absolute;left:2066px;top:1972px;width:2px;height:5px;background:#ffffff;"></div>
<div style="position:absolute;left:2083px;top:1972px;width:2px;height:3px;background:#7a7a7a;"></div>
<div style="position:absolute;left:2100px;top:1972px;width:2px;height:3px;background:#7a7a7a;"></div>
<div style="position:absolute;left:2117px;top:1972px;width:2px;height:3px;background:#7a7a7a;"></div>
<div style="position:absolute;left:2134px;top:1972px;width:2px;height:3px;background:#7a7a7a;"></div>
<div style="position:absolute;left:2151px;top:1972px;width:2px;height:5px;background:#ffffff;"></div>
<div style="position:absolute;left:2168px;top:1972px;width:2px;height:3px;background:#7a7a7a;"></div>
<div style="position:absolute;left:2185px;top:1972px;width:2px;height:3px;background:#7a7a7a;"></div>
<div style="position:absolute;left:2202px;top:1972px;width:2px;height:3px;background:#7a7a7a;"></div>
<div style="position:absolute;left:2219px;top:1972px;width:2px;height:3px;background:#7a7a7a;"></div>
<div style="position:absolute;left:2236px;top:1972px;width:2px;height:5px;background:#ffffff;"></div>
<div style="position:absolute;left:2253px;top:1972px;width:2px;height:3px;background:#7a7a7a;"></div>
<div style="position:absolute;left:2270px;top:1972px;width:2px;height:3px;background:#7a7a7a;"></div>
<div style="position:absolute;left:2287px;top:1972px;width:2px;height:3px;background:#7a7a7a;"></div>
<div style="position:absolute;left:2304px;top:1972px;width:2px;height:3px;background:#7a7a7a;"></div>
<div style="position:absolute;left:2321px;top:1972px;width:2px;height:5px;background:#ffffff;"></div>
<div style="position:absolute;left:2338px;top:1972px;width:2px;height:3px;background:#7a7a7a;"></div>
<div style="position:absolute;left:2355px;top:1972px;width:2px;height:3px;background:#7a7a7a;"></div>
<div style="position:absolute;left:2372px;top:1972px;width:2px;height:3px;background:#7a7a7a;"></div>
<div style="position:absolute;left:2389px;top:1972px;width:2px;height:3px;background:#7a7a7a;"></div>
<div style="position:absolute;left:2406px;top:1972px;width:2px;height:5px;background:#ffffff;"></div>
<div style="position:absolute;left:1377px;top:2025px;width:879px;height:10px;background:#3c404b;border-radius:5px;"></div>
<div style="position:absolute;left:1377px;top:2025px;width:590px;height:10px;background:#2b83db;border-radius:5px;"></div>
<div style="position:absolute;left:1958px;top:2021px;width:40px;height:18px;background:#ffffff;border-radius:5px;box-shadow:0 0 0 1.2px #15161c;"></div>
<svg style="position:absolute;left:2267px;top:2014px" width="40" height="33" viewBox="0 0 40 33"><path d="M6.5 8.8 H8 L17 0 V32 L8 23 H6.5 Q0.7 23 0.7 16 Q0.7 8.8 6.5 8.8 Z" fill="#fff"/><path d="M22.9 8.7 Q28.1 16.5 22.9 24.3" fill="none" stroke="#fff" stroke-width="5.2" stroke-linecap="round"/><path d="M31.3 4 Q37.5 16.1 31.3 28.2" fill="none" stroke="#fff" stroke-width="5.2" stroke-linecap="round"/></svg>
<div style="position:absolute;left:2333px;top:2001px;width:72px;height:58px;background:#3c404b;border-radius:8px;"></div>
<svg style="position:absolute;left:2363px;top:2010px" width="12" height="40" viewBox="0 0 12 40"><circle cx="6" cy="6.0" r="5" fill="#fff"/><circle cx="6" cy="19.5" r="5" fill="#fff"/><circle cx="6" cy="33.0" r="5" fill="#fff"/></svg>
<div style="position:absolute;left:1379px;top:2166px;width:69px;height:59px;background:#3c404b;border-radius:8px;"></div>
<div style="position:absolute;left:1472px;top:2166px;width:69px;height:59px;background:#3c404b;border-radius:8px;"></div>
<div style="position:absolute;left:1457px;top:2170px;width:2px;height:48px;background:#17181e;"></div>
<svg style="position:absolute;left:1500px;top:2176px" width="12" height="40" viewBox="0 0 12 40"><circle cx="6" cy="6.0" r="5" fill="#fff"/><circle cx="6" cy="19.5" r="5" fill="#fff"/><circle cx="6" cy="33.0" r="5" fill="#fff"/></svg>
<svg style="position:absolute;left:1394px;top:2177px" width="40" height="36" viewBox="0 0 40 36"><g fill="#fff"><circle cx="13.1" cy="20.5" r="8.84"/><rect x="10.58" y="8.30" width="5.03" height="6.10" rx="1.68" transform="rotate(0 13.1 20.5)"/><rect x="10.58" y="8.30" width="5.03" height="6.10" rx="1.68" transform="rotate(45 13.1 20.5)"/><rect x="10.58" y="8.30" width="5.03" height="6.10" rx="1.68" transform="rotate(90 13.1 20.5)"/><rect x="10.58" y="8.30" width="5.03" height="6.10" rx="1.68" transform="rotate(135 13.1 20.5)"/><rect x="10.58" y="8.30" width="5.03" height="6.10" rx="1.68" transform="rotate(180 13.1 20.5)"/><rect x="10.58" y="8.30" width="5.03" height="6.10" rx="1.68" transform="rotate(225 13.1 20.5)"/><rect x="10.58" y="8.30" width="5.03" height="6.10" rx="1.68" transform="rotate(270 13.1 20.5)"/><rect x="10.58" y="8.30" width="5.03" height="6.10" rx="1.68" transform="rotate(315 13.1 20.5)"/></g><circle cx="13.1" cy="20.5" r="4.27" fill="#3c404b"/><g fill="#fff"><circle cx="29.2" cy="9.2" r="5.58"/><rect x="27.61" y="1.50" width="3.18" height="3.85" rx="1.06" transform="rotate(0 29.2 9.2)"/><rect x="27.61" y="1.50" width="3.18" height="3.85" rx="1.06" transform="rotate(45 29.2 9.2)"/><rect x="27.61" y="1.50" width="3.18" height="3.85" rx="1.06" transform="rotate(90 29.2 9.2)"/><rect x="27.61" y="1.50" width="3.18" height="3.85" rx="1.06" transform="rotate(135 29.2 9.2)"/><rect x="27.61" y="1.50" width="3.18" height="3.85" rx="1.06" transform="rotate(180 29.2 9.2)"/><rect x="27.61" y="1.50" width="3.18" height="3.85" rx="1.06" transform="rotate(225 29.2 9.2)"/><rect x="27.61" y="1.50" width="3.18" height="3.85" rx="1.06" transform="rotate(270 29.2 9.2)"/><rect x="27.61" y="1.50" width="3.18" height="3.85" rx="1.06" transform="rotate(315 29.2 9.2)"/></g><circle cx="29.2" cy="9.2" r="2.41" fill="#3c404b"/></svg>
<div style="position:absolute;left:2448px;top:1742px;width:641px;height:63px;background:#3c404b;border-radius:8px;"></div>
<div style="position:absolute;left:3042px;top:1742px;width:2px;height:63px;background:#17181e;"></div>
<svg style="position:absolute;left:3059px;top:1761px" width="16" height="9.5" viewBox="0 0 16 9.5"><path d="M2 7.5 L8.0 2 L14 7.5" fill="none" stroke="#fff" stroke-width="1.8" stroke-linecap="round" stroke-linejoin="round"/></svg>
<svg style="position:absolute;left:3059px;top:1779px" width="16" height="9.5" viewBox="0 0 16 9.5"><path d="M2 2 L8.0 7.5 L14 2" fill="none" stroke="#fff" stroke-width="1.8" stroke-linecap="round" stroke-linejoin="round"/></svg>
<div style="position:absolute;left:2574px;top:1818px;width:513px;height:70px;background:#3c404b;border-radius:8px;"></div>
<svg style="position:absolute;left:3051.5px;top:1830.5px" width="19" height="12.5" viewBox="0 0 19 12.5"><path d="M2 10.5 L9.5 2 L17 10.5" fill="none" stroke="#fff" stroke-width="2.2" stroke-linecap="round" stroke-linejoin="round"/></svg>
<svg style="position:absolute;left:3051.5px;top:1862px" width="19" height="12.5" viewBox="0 0 19 12.5"><path d="M2 2 L9.5 10.5 L17 2" fill="none" stroke="#fff" stroke-width="2.2" stroke-linecap="round" stroke-linejoin="round"/></svg>
<div style="position:absolute;left:2837px;top:1899px;width:72px;height:58px;background:#3c404b;border-radius:8px;"></div>
<div style="position:absolute;left:2927px;top:1899px;width:72px;height:58px;background:#1b1d27;border-radius:8px;"></div>
<div style="position:absolute;left:3017px;top:1899px;width:72px;height:58px;background:#1b1d27;border-radius:8px;"></div>
<svg style="position:absolute;left:2857px;top:1913px" width="32" height="32" viewBox="0 0 32 32"><path d="M16 0 V32 M0 16 H32" stroke="#fff" stroke-width="3.6"/></svg>
<svg style="position:absolute;left:2946px;top:1911px" width="35" height="37" viewBox="0 0 35 37"><rect x="-0.2" y="2" width="34.4" height="5.1" rx="1.6" fill="#d6d8e0"/><path d="M9.4 2.5 Q10.4 -0.1 12.9 -0.1 H20.7 Q23.2 -0.1 24.2 2.5 Z" fill="#d6d8e0"/><path d="M4.55 9 V28 Q4.55 33.45 10 33.45 H24 Q29.45 33.45 29.45 28 V9" fill="none" stroke="#d6d8e0" stroke-width="5.1"/><rect x="11.1" y="11" width="2.9" height="16" fill="#d6d8e0"/><rect x="16" y="11" width="2.2" height="16" fill="#d6d8e0"/><rect x="20.3" y="11" width="2.7" height="16" fill="#d6d8e0"/></svg>
<svg style="position:absolute;left:3047px;top:1909px" width="12" height="40" viewBox="0 0 12 40"><circle cx="6" cy="6.0" r="5" fill="#d6d8e0"/><circle cx="6" cy="19.5" r="5" fill="#d6d8e0"/><circle cx="6" cy="33.0" r="5" fill="#d6d8e0"/></svg>
<div style="position:absolute;left:3125px;top:1740px;width:704px;height:85px;background:#3c404b;border-radius:8px;"></div>
<div style="position:absolute;left:3125px;top:1834px;width:704px;height:85px;background:#3c404b;border-radius:8px;"></div>
<div style="position:absolute;left:3125px;top:2005px;width:704px;height:67px;background:#3c404b;border-radius:8px;"></div>
<div style="position:absolute;left:3125px;top:2082px;width:704px;height:66px;background:#3c404b;border-radius:8px;"></div>
<div style="position:absolute;left:3125px;top:2159px;width:704px;height:66px;background:#3c404b;border-radius:8px;"></div>
<div style="position:absolute;left:3125px;top:1929px;width:627px;height:66px;background:#3c404b;border-radius:8px;"></div>
<div style="position:absolute;left:3762px;top:1929px;width:67px;height:66px;background:#3c404b;border-radius:8px;"></div>
<svg style="position:absolute;left:3780px;top:1946px" width="32" height="32" viewBox="0 0 32 32"><g fill="#fff"><circle cx="16.0" cy="16.0" r="11.60"/><rect x="12.70" y="0.00" width="6.60" height="8.00" rx="2.20" transform="rotate(0 16.0 16.0)"/><rect x="12.70" y="0.00" width="6.60" height="8.00" rx="2.20" transform="rotate(45 16.0 16.0)"/><rect x="12.70" y="0.00" width="6.60" height="8.00" rx="2.20" transform="rotate(90 16.0 16.0)"/><rect x="12.70" y="0.00" width="6.60" height="8.00" rx="2.20" transform="rotate(135 16.0 16.0)"/><rect x="12.70" y="0.00" width="6.60" height="8.00" rx="2.20" transform="rotate(180 16.0 16.0)"/><rect x="12.70" y="0.00" width="6.60" height="8.00" rx="2.20" transform="rotate(225 16.0 16.0)"/><rect x="12.70" y="0.00" width="6.60" height="8.00" rx="2.20" transform="rotate(270 16.0 16.0)"/><rect x="12.70" y="0.00" width="6.60" height="8.00" rx="2.20" transform="rotate(315 16.0 16.0)"/></g><circle cx="16.0" cy="16.0" r="6.70" fill="#3c404b"/></svg>
<div style="position:absolute;left:0px;top:2293px;width:3841px;height:2px;background:#3f3f3f;"></div>
<svg style="position:absolute;left:2876px;top:2244px" width="56" height="44" viewBox="0 0 56 44"><circle cx="27.5" cy="22.5" r="8.4" fill="#a09f9b"/><path d="M14.90 37.51 A19.6 19.6 0 0 1 14.90 7.49" fill="none" stroke="#a09f9b" stroke-width="3.9" stroke-linecap="round"/><path d="M20.50 32.49 A12.2 12.2 0 0 1 20.50 12.51" fill="none" stroke="#a09f9b" stroke-width="3.8" stroke-linecap="round"/><path d="M40.10 7.49 A19.6 19.6 0 0 1 40.10 37.51" fill="none" stroke="#a09f9b" stroke-width="3.9" stroke-linecap="round"/><path d="M34.50 12.51 A12.2 12.2 0 0 1 34.50 32.49" fill="none" stroke="#a09f9b" stroke-width="3.8" stroke-linecap="round"/><path d="M15 40 L46 8" stroke="#1f212a" stroke-width="3.4"/><path d="M12.3 37.6 L43.5 5.4" stroke="#a09f9b" stroke-width="4.4"/></svg>
<svg style="position:absolute;left:3145px;top:2244px" width="40" height="44" viewBox="0 0 40 44"><circle cx="20.5" cy="22.5" r="11.6" fill="#a09f9b"/><path d="M10.2 36.2 L34.5 11.6" stroke="#1f212a" stroke-width="3"/><path d="M7.4 33.8 L31.3 9.8" stroke="#a09f9b" stroke-width="3.6"/></svg>
<div style="position:absolute;left:776px;top:104px;width:434px;height:435px;background:#1f212a;"></div>
<div style="position:absolute;left:796px;top:186px;width:394px;height:2px;background:#3a3d4a;"></div>
<div style="position:absolute;left:783px;top:465px;width:420px;height:68px;background:#284cb8;border-radius:8px;"></div>
<div style="position:absolute;left:3840px;top:89px;width:1px;height:1291px;background:#ffffff;"></div>
<div style="position:absolute;left:3840px;top:1380px;width:1px;height:60px;background:#1c1c1c;"></div>
<div style="position:absolute;left:3840px;top:1440px;width:1px;height:855px;background:#000;"></div>
<div style="position:absolute;left:41.959px;top:14.40px;font-size:28px;line-height:28px;font-weight:400;color:#fff;white-space:pre;transform:scaleX(0.94147);transform-origin:0 0;">OBS 29.1.2 - Profile: Untitled - Scenes: Untitled</div>
<div style="position:absolute;left:18.501px;top:62.80px;font-size:31px;line-height:31px;font-weight:400;color:#fff;white-space:pre;transform:scaleX(0.92428);transform-origin:0 0;">File</div>
<div style="position:absolute;left:102.038px;top:62.80px;font-size:31px;line-height:31px;font-weight:400;color:#fff;white-space:pre;transform:scaleX(0.98116);transform-origin:0 0;">Edit</div>
<div style="position:absolute;left:192.598px;top:62.80px;font-size:31px;line-height:31px;font-weight:400;color:#fff;white-space:pre;transform:scaleX(0.93137);transform-origin:0 0;">View</div>
<div style="position:absolute;left:292.826px;top:62.80px;font-size:31px;line-height:31px;font-weight:400;color:#fff;white-space:pre;transform:scaleX(0.95499);transform-origin:0 0;">Docks</div>
<div style="position:absolute;left:411.086px;top:62.80px;font-size:31px;line-height:31px;font-weight:400;color:#fff;white-space:pre;transform:scaleX(0.99901);transform-origin:0 0;">Profile</div>
<div style="position:absolute;left:535.078px;top:62.80px;font-size:31px;line-height:31px;font-weight:400;color:#fff;white-space:pre;transform:scaleX(0.95855);transform-origin:0 0;">Scene Collection</div>
<div style="position:absolute;left:795.007px;top:62.80px;font-size:31px;line-height:31px;font-weight:400;color:#fff;white-space:pre;transform:scaleX(0.96494);transform-origin:0 0;">Tools</div>
<div style="position:absolute;left:902.504px;top:62.80px;font-size:31px;line-height:31px;font-weight:400;color:#fff;white-space:pre;transform:scaleX(0.99187);transform-origin:0 0;">Help</div>
<div style="position:absolute;left:22.060px;top:1584.40px;font-size:32px;line-height:32px;font-weight:400;color:#fff;white-space:pre;transform:scaleX(0.94536);transform-origin:0 0;">No source selected</div>
<div style="position:absolute;left:546.077px;top:1584.40px;font-size:32px;line-height:32px;font-weight:400;color:#9b9b9b;white-space:pre;transform:scaleX(0.97188);transform-origin:0 0;">Properties</div>
<div style="position:absolute;left:801.132px;top:1584.40px;font-size:32px;line-height:32px;font-weight:400;color:#9b9b9b;white-space:pre;transform:scaleX(0.95196);transform-origin:0 0;">Filters</div>
<div style="position:absolute;left:26.543px;top:1678.50px;font-size:32px;line-height:32px;font-weight:700;color:#fff;white-space:pre;transform:scaleX(0.95819);transform-origin:0 0;">Scenes</div>
<div style="position:absolute;left:708.240px;top:1678.50px;font-size:32px;line-height:32px;font-weight:700;color:#fff;white-space:pre;transform:scaleX(0.96215);transform-origin:0 0;">Sources</div>
<div style="position:absolute;left:1390.066px;top:1678.50px;font-size:32px;line-height:32px;font-weight:700;color:#fff;white-space:pre;transform:scaleX(1.03243);transform-origin:0 0;">Audio Mixer</div>
<div style="position:absolute;left:2459.098px;top:1678.50px;font-size:32px;line-height:32px;font-weight:700;color:#fff;white-space:pre;transform:scaleX(1.00147);transform-origin:0 0;">Scene Transitions</div>
<div style="position:absolute;left:3141.000px;top:1678.50px;font-size:32px;line-height:32px;font-weight:700;color:#fff;white-space:pre;transform:scaleX(1.00006);transform-origin:0 0;">Controls</div>
<div style="position:absolute;left:29.617px;top:1757.00px;font-size:32px;line-height:32px;font-weight:400;color:#fff;white-space:pre;transform:scaleX(0.88549);transform-origin:0 0;">Scene</div>
<div style="position:absolute;left:833.048px;top:1946.00px;font-size:32px;line-height:32px;font-weight:400;color:#fff;white-space:pre;transform:scaleX(0.95202);transform-origin:0 0;">You don't have any sources.</div>
<div style="position:absolute;left:855.266px;top:1987.00px;font-size:32px;line-height:32px;font-weight:400;color:#fff;white-space:pre;transform:scaleX(0.96502);transform-origin:0 0;">Click the + button below,</div>
<div style="position:absolute;left:823.631px;top:2028.00px;font-size:32px;line-height:32px;font-weight:400;color:#fff;white-space:pre;transform:scaleX(0.96919);transform-origin:0 0;">or right click here to add one.</div>
<div style="position:absolute;left:1376.898px;top:1746.00px;font-size:32px;line-height:32px;font-weight:400;color:#fff;white-space:pre;transform:scaleX(0.96639);transform-origin:0 0;">Desktop Audio</div>
<div style="position:absolute;left:2321.067px;top:1746.00px;font-size:32px;line-height:32px;font-weight:400;color:#fff;white-space:pre;transform:scaleX(0.93333);transform-origin:0 0;">0.0 dB</div>
<div style="position:absolute;left:1376.778px;top:1808.00px;font-size:20px;line-height:20px;font-weight:400;color:#fff;white-space:pre;transform:scaleX(1.03381);transform-origin:0 0;">-60</div>
<div style="position:absolute;left:1457.980px;top:1808.00px;font-size:20px;line-height:20px;font-weight:400;color:#fff;white-space:pre;transform:scaleX(1.01947);transform-origin:0 0;">-55</div>
<div style="position:absolute;left:1542.735px;top:1808.00px;font-size:20px;line-height:20px;font-weight:400;color:#fff;white-space:pre;transform:scaleX(1.01947);transform-origin:0 0;">-50</div>
<div style="position:absolute;left:1627.472px;top:1808.00px;font-size:20px;line-height:20px;font-weight:400;color:#fff;white-space:pre;transform:scaleX(1.01947);transform-origin:0 0;">-45</div>
<div style="position:absolute;left:1712.226px;top:1808.00px;font-size:20px;line-height:20px;font-weight:400;color:#fff;white-space:pre;transform:scaleX(1.01947);transform-origin:0 0;">-40</div>
<div style="position:absolute;left:1796.981px;top:1808.00px;font-size:20px;line-height:20px;font-weight:400;color:#fff;white-space:pre;transform:scaleX(1.01947);transform-origin:0 0;">-35</div>
<div style="position:absolute;left:1882.718px;top:1808.00px;font-size:20px;line-height:20px;font-weight:400;color:#fff;white-space:pre;transform:scaleX(1.01947);transform-origin:0 0;">-30</div>
<div style="position:absolute;left:1967.472px;top:1808.00px;font-size:20px;line-height:20px;font-weight:400;color:#fff;white-space:pre;transform:scaleX(1.01947);transform-origin:0 0;">-25</div>
<div style="position:absolute;left:2052.226px;top:1808.00px;font-size:20px;line-height:20px;font-weight:400;color:#fff;white-space:pre;transform:scaleX(1.01947);transform-origin:0 0;">-20</div>
<div style="position:absolute;left:2136.981px;top:1808.00px;font-size:20px;line-height:20px;font-weight:400;color:#fff;white-space:pre;transform:scaleX(1.01947);transform-origin:0 0;">-15</div>
<div style="position:absolute;left:2221.735px;top:1808.00px;font-size:20px;line-height:20px;font-weight:400;color:#fff;white-space:pre;transform:scaleX(1.01947);transform-origin:0 0;">-10</div>
<div style="position:absolute;left:2312.188px;top:1808.00px;font-size:20px;line-height:20px;font-weight:400;color:#fff;white-space:pre;transform:scaleX(1.06250);transform-origin:0 0;">-5</div>
<div style="position:absolute;left:2395.415px;top:1808.00px;font-size:20px;line-height:20px;font-weight:400;color:#fff;white-space:pre;transform:scaleX(1.06302);transform-origin:0 0;">0</div>
<div style="position:absolute;left:1376.889px;top:1915.00px;font-size:32px;line-height:32px;font-weight:400;color:#fff;white-space:pre;transform:scaleX(0.96742);transform-origin:0 0;">Mic/Aux</div>
<div style="position:absolute;left:2312.080px;top:1915.00px;font-size:32px;line-height:32px;font-weight:400;color:#fff;white-space:pre;transform:scaleX(0.92011);transform-origin:0 0;">-8.3 dB</div>
<div style="position:absolute;left:1376.778px;top:1977.00px;font-size:20px;line-height:20px;font-weight:400;color:#fff;white-space:pre;transform:scaleX(1.03381);transform-origin:0 0;">-60</div>
<div style="position:absolute;left:1457.980px;top:1977.00px;font-size:20px;line-height:20px;font-weight:400;color:#fff;white-space:pre;transform:scaleX(1.01947);transform-origin:0 0;">-55</div>
<div style="position:absolute;left:1542.735px;top:1977.00px;font-size:20px;line-height:20px;font-weight:400;color:#fff;white-space:pre;transform:scaleX(1.01947);transform-origin:0 0;">-50</div>
<div style="position:absolute;left:1627.472px;top:1977.00px;font-size:20px;line-height:20px;font-weight:400;color:#fff;white-space:pre;transform:scaleX(1.01947);transform-origin:0 0;">-45</div>
<div style="position:absolute;left:1712.226px;top:1977.00px;font-size:20px;line-height:20px;font-weight:400;color:#fff;white-space:pre;transform:scaleX(1.01947);transform-origin:0 0;">-40</div>
<div style="position:absolute;left:1796.981px;top:1977.00px;font-size:20px;line-height:20px;font-weight:400;color:#fff;white-space:pre;transform:scaleX(1.01947);transform-origin:0 0;">-35</div>
<div style="position:absolute;left:1882.718px;top:1977.00px;font-size:20px;line-height:20px;font-weight:400;color:#fff;white-space:pre;transform:scaleX(1.01947);transform-origin:0 0;">-30</div>
<div style="position:absolute;left:1967.472px;top:1977.00px;font-size:20px;line-height:20px;font-weight:400;color:#fff;white-space:pre;transform:scaleX(1.01947);transform-origin:0 0;">-25</div>
<div style="position:absolute;left:2052.226px;top:1977.00px;font-size:20px;line-height:20px;font-weight:400;color:#fff;white-space:pre;transform:scaleX(1.01947);transform-origin:0 0;">-20</div>
<div style="position:absolute;left:2136.981px;top:1977.00px;font-size:20px;line-height:20px;font-weight:400;color:#fff;white-space:pre;transform:scaleX(1.01947);transform-origin:0 0;">-15</div>
<div style="position:absolute;left:2221.735px;top:1977.00px;font-size:20px;line-height:20px;font-weight:400;color:#fff;white-space:pre;transform:scaleX(1.01947);transform-origin:0 0;">-10</div>
<div style="position:absolute;left:2312.188px;top:1977.00px;font-size:20px;line-height:20px;font-weight:400;color:#fff;white-space:pre;transform:scaleX(1.06250);transform-origin:0 0;">-5</div>
<div style="position:absolute;left:2395.415px;top:1977.00px;font-size:20px;line-height:20px;font-weight:400;color:#fff;white-space:pre;transform:scaleX(1.06302);transform-origin:0 0;">0</div>
<div style="position:absolute;left:2470.078px;top:1757.80px;font-size:32px;line-height:32px;font-weight:400;color:#fff;white-space:pre;transform:scaleX(0.90169);transform-origin:0 0;">Fade</div>
<div style="position:absolute;left:2441.881px;top:1837.00px;font-size:32px;line-height:32px;font-weight:400;color:#fff;white-space:pre;transform:scaleX(1.00102);transform-origin:0 0;">Duration</div>
<div style="position:absolute;left:2593.248px;top:1836.00px;font-size:32px;line-height:32px;font-weight:400;color:#fff;white-space:pre;transform:scaleX(0.94954);transform-origin:0 0;">300 ms</div>
<div style="position:absolute;left:3370.977px;top:1767.50px;font-size:32px;line-height:32px;font-weight:400;color:#fff;white-space:pre;transform:scaleX(0.95558);transform-origin:0 0;">Start Streaming</div>
<div style="position:absolute;left:3372.906px;top:1862.30px;font-size:32px;line-height:32px;font-weight:400;color:#fff;white-space:pre;transform:scaleX(0.94592);transform-origin:0 0;">Start Recording</div>
<div style="position:absolute;left:3389.956px;top:2023.40px;font-size:32px;line-height:32px;font-weight:400;color:#fff;white-space:pre;transform:scaleX(0.96655);transform-origin:0 0;">Studio Mode</div>
<div style="position:absolute;left:3423.342px;top:2099.30px;font-size:32px;line-height:32px;font-weight:400;color:#fff;white-space:pre;transform:scaleX(0.92666);transform-origin:0 0;">Settings</div>
<div style="position:absolute;left:3452.174px;top:2175.70px;font-size:32px;line-height:32px;font-weight:400;color:#fff;white-space:pre;transform:scaleX(0.93661);transform-origin:0 0;">Exit</div>
<div style="position:absolute;left:3301.907px;top:1947.50px;font-size:32px;line-height:32px;font-weight:400;color:#fff;white-space:pre;transform:scaleX(0.94463);transform-origin:0 0;">Start Virtual Camera</div>
<div style="position:absolute;left:2940.237px;top:2251.00px;font-size:31px;line-height:31px;font-weight:400;color:#fff;white-space:pre;transform:scaleX(0.91944);transform-origin:0 0;">LIVE: 00:00:00</div>
<div style="position:absolute;left:3201.777px;top:2251.00px;font-size:31px;line-height:31px;font-weight:400;color:#fff;white-space:pre;transform:scaleX(0.90708);transform-origin:0 0;">REC: 00:00:00</div>
<div style="position:absolute;left:3445.052px;top:2251.00px;font-size:31px;line-height:31px;font-weight:400;color:#fff;white-space:pre;transform:scaleX(0.92171);transform-origin:0 0;">CPU: 0.1%, 59.94 fps</div>
<div style="position:absolute;left:797.000px;top:131.40px;font-size:31px;line-height:31px;font-weight:400;color:#fff;white-space:pre;transform:scaleX(0.99171);transform-origin:0 0;">Auto-Configuration Wizard</div>
<div style="position:absolute;left:796.033px;top:214.00px;font-size:31px;line-height:31px;font-weight:400;color:#fff;white-space:pre;transform:scaleX(0.98177);transform-origin:0 0;">Captions (Experimental)</div>
<div style="position:absolute;left:797.000px;top:282.00px;font-size:31px;line-height:31px;font-weight:400;color:#fff;white-space:pre;transform:scaleX(0.96815);transform-origin:0 0;">Automatic Scene Switcher</div>
<div style="position:absolute;left:795.971px;top:349.00px;font-size:31px;line-height:31px;font-weight:400;color:#fff;white-space:pre;transform:scaleX(1.02866);transform-origin:0 0;">Output Timer</div>
<div style="position:absolute;left:796.063px;top:416.00px;font-size:31px;line-height:31px;font-weight:400;color:#fff;white-space:pre;transform:scaleX(0.96635);transform-origin:0 0;">Scripts</div>
<div style="position:absolute;left:797.000px;top:483.60px;font-size:31px;line-height:31px;font-weight:400;color:#fff;white-space:pre;transform:scaleX(0.94828);transform-origin:0 0;">WebSocket Server Settings</div>
</body></html>
